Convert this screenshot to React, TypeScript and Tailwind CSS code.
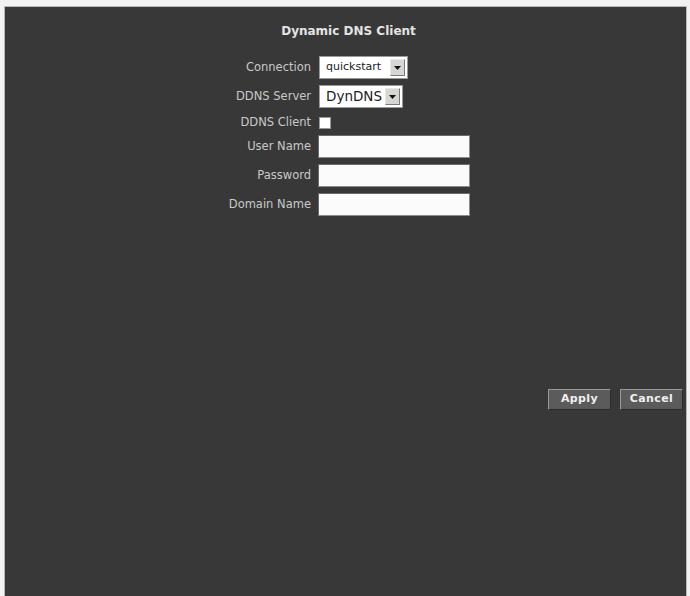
const label = "w-[306px] shrink-0 text-right text-[11.5px] text-[#c9c9c9]";

function DropDown({ value, width, textClass }: { value: string; width: string; textClass: string }) {
    return (
        <div className={`flex h-[23px] ${width} items-stretch border border-[#9a9a9a] bg-white p-[2px]`}>
            <div className={`flex flex-1 items-center pl-[4px] text-[#222] ${textClass}`}>{value}</div>
            <div className="flex w-[15px] items-center justify-center border border-[#e8e8e8] border-b-[#7a7a7a] border-r-[#7a7a7a] bg-[#d8d6d2]">
                <svg width="7" height="4" viewBox="0 0 7 4">
                    <path d="M0 0h7L3.5 4z" fill="#111" />
                </svg>
            </div>
        </div>
    );
}

function TextField() {
    return <div className="h-[23px] w-[152px] border border-[#8c8c8c] border-l-[#6a6a6a] border-t-[#6a6a6a] bg-[#fbfbfb]" />;
}

function Button({ text, width }: { text: string; width: string }) {
    return (
        <button
            className={`h-[21px] ${width} border border-[#9a9a9a] border-b-[#2a2a2a] border-r-[#2a2a2a] bg-[#5b5b5b] text-[11px] font-bold tracking-[0.4px] text-[#efefef]`}
        >
            {text}
        </button>
    );
}

export default function App() {
    return (
        <div
            className="flex h-[596px] w-[690px] flex-col bg-[#f2f2f2] pl-[4px] pr-[3px] pt-[6px]"
            style={{ fontFamily: '"DejaVu Sans", Verdana, sans-serif' }}
        >
            <div className="flex flex-1 flex-col border border-b-0 border-[#b8b8b8] bg-[#383838]">
                <h1 className="mt-[16px] pl-[6px] text-center text-[12px] font-bold leading-[16px] text-[#e4e4e4]">
                    Dynamic DNS Client
                </h1>

                <div className="mt-[17px] flex h-[23px] items-center gap-[8px]">
                    <span className={label}>Connection</span>
                    <DropDown value="quickstart" width="w-[89px]" textClass="text-[11px]" />
                </div>
                <div className="mt-[6px] flex h-[23px] items-center gap-[8px]">
                    <span className={label}>DDNS Server</span>
                    <DropDown value="DynDNS" width="w-[84px]" textClass="text-[13.5px]" />
                </div>
                <div className="mt-[3px] flex h-[23px] items-center gap-[8px]">
                    <span className={label}>DDNS Client</span>
                    <div className="h-[12px] w-[12px] border border-[#9a9a9a] bg-white" />
                </div>
                <div className="mt-[1px] flex h-[23px] items-center gap-[7px]">
                    <span className={label}>User Name</span>
                    <TextField />
                </div>
                <div className="mt-[6px] flex h-[23px] items-center gap-[7px]">
                    <span className={label}>Password</span>
                    <TextField />
                </div>
                <div className="mt-[6px] flex h-[23px] items-center gap-[7px]">
                    <span className={label}>Domain Name</span>
                    <TextField />
                </div>

                <div className="mt-[173px] flex justify-end gap-[9px] pr-[3px]">
                    <Button text="Apply" width="w-[63px]" />
                    <Button text="Cancel" width="w-[63px]" />
                </div>
            </div>
        </div>
    );
}
